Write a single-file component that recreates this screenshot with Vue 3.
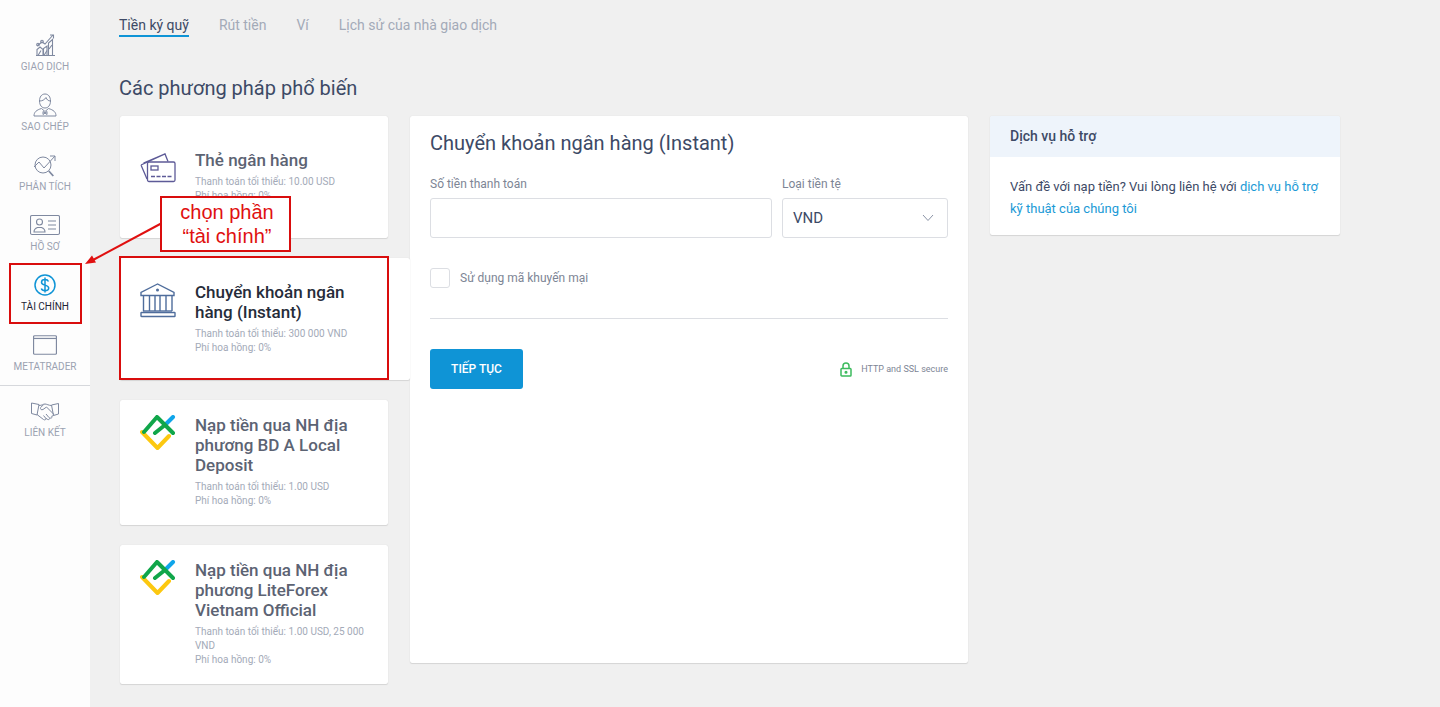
<script setup>
const tabs = ["Tiền ký quỹ", "Rút tiền", "Ví", "Lịch sử của nhà giao dịch"]
</script>

<template>
  <div class="page">
    <aside class="sidebar">
      <div class="nav-item">
        <svg width="24" height="24" viewBox="0 0 24 24" fill="none" stroke="#7f89a0" stroke-width="1.100">
          <path d="M3 22.500h19M4 22.500v-6l3-2.500 3 2.500v6M10.500 22.500v-7l3.500-2.500v9.500M15.500 22.500V10l4-3.500v16" />
          <path d="M5 22.500l3-5M11 22.500l3-5M16 16l3-4" />
          <path d="M4 13l5-4 3 2 8-9M17 2h3.500v3.500" />
          <circle cx="5" cy="11.500" r="1.300" /><circle cx="9" cy="8.500" r="1.300" />
        </svg>
        <span>Giao dịch</span>
      </div>
      <div class="nav-item">
        <svg width="24" height="24" viewBox="0 0 24 24" fill="none" stroke="#7f89a0" stroke-width="1">
          <path d="M6.500 8c0-4 2-7 5.500-7s5.500 3 5.500 7c0 4-2.200 7-5.500 7s-5.500-3-5.500-7z" />
          <path d="M6.500 8c2.500 0 5-1 6.500-3.500 .8 2 2 3.500 4.500 3.500" />
          <path d="M1 23c0-4 2.500-6 7.500-7.500l3.500 3 3.500-3c5 1.500 7.500 3.500 7.500 7.500z" />
          <path d="M10 18.500l2 1.500 2-1.500v3l-2-1.500-2 1.500z" />
        </svg>
        <span>Sao chép</span>
      </div>
      <div class="nav-item">
        <svg width="24" height="24" viewBox="0 0 24 24" fill="none" stroke="#7f89a0" stroke-width="1">
          <circle cx="10" cy="12" r="8" />
          <path d="M15.800 18l4.500 5" stroke-width="1.800" />
          <path d="M1 14l5-5 5 6 11-12M17 3h5v5" />
        </svg>
        <span>Phân tích</span>
      </div>
      <div class="nav-item">
        <svg width="30" height="22" viewBox="0 0 30 22" fill="none" stroke="#7f89a0" stroke-width="1.100">
          <rect x="0.500" y="1.500" width="29" height="19" rx="1.500" />
          <circle cx="9.500" cy="8" r="3" />
          <path d="M4 18c0-3 2-4 3.500-4.500h4C13 14 15 15 15 18z" />
          <path d="M18 7h8M18 11h8M18 15h8" />
        </svg>
        <span>Hồ sơ</span>
      </div>
      <div class="nav-item active">
        <svg width="24" height="24" viewBox="0 0 24 24" fill="none" stroke="#0f94d6">
          <circle cx="12" cy="12" r="10" stroke-width="1.500" />
          <path d="M15.500 8.500c-.5-1.300-2-2-3.500-2-2 0-3.500 1-3.500 2.700 0 3.800 7.200 2 7.200 5.800 0 1.700-1.700 2.600-3.700 2.600-1.700 0-3.200-.8-3.700-2.200M12 4.500v15" stroke-width="1.500" />
        </svg>
        <span>Tài chính</span>
      </div>
      <div class="nav-item">
        <svg width="24" height="20" viewBox="0 0 22 18" fill="none" stroke="#7f89a0" stroke-width="1.100">
          <rect x="0.500" y="0.500" width="21" height="17" rx="1" />
          <path d="M0.500 3h21" />
        </svg>
        <span>MetaTrader</span>
      </div>
      <div class="nav-divider"></div>
      <div class="nav-item partner">
        <svg width="30" height="20" viewBox="0 0 30 20" fill="none" stroke="#7f89a0" stroke-width="1">
          <path d="M1.500 2l7.500 1.500-2 10.500-5.500-1.500zM28.500 2.500L21.500 4l2 10.500 5-1.500z" />
          <path d="M9 4.500c3 0 4-1.500 6-1.500 1.500 0 4 1.500 6.500 1.500M23.500 13l-7-7-3.500 2.500c-1.500 .8-3.200-.3-2.300-2l3-3" />
          <path d="M7 13.500l6.500 5c1.500 1 2.700 0 2.300-1.200l2 1.200c1.300 .5 2.200-.7 1.700-1.700l1 .3c1.300 .2 2-1 1.200-2l.8-.3c1 0 1.500-.7 1-1.500M13.500 14.500l2.300 2.800M16 13l3 3.600" />
        </svg>
        <span>Liên kết</span>
      </div>
    </aside>

    <main class="main">
      <nav class="tabs">
        <a v-for="(tab, index) in tabs" :key="tab" class="tab" :class="{ current: index === 0 }">{{ tab }}</a>
      </nav>
      <h1 class="title">Các phương pháp phổ biến</h1>

      <div class="columns">
        <div class="methods">
          <div class="card">
            <div class="card-row">
              <svg class="method-icon card-icon" width="36" height="30" viewBox="0 0 36 30" fill="none" stroke="#5d5a97" stroke-width="1.300">
                <path d="M1 12L25 1l3 7.500M1 12l6 14M3.500 10l21-9" />
                <rect x="7.500" y="9" width="27.500" height="19.500" rx="1.500" fill="#fff" />
                <rect x="11" y="13" width="7" height="4" />
                <path d="M11 23.500h21" stroke-dasharray="4 1.500" />
              </svg>
              <div class="info">
                <h3>Thẻ ngân hàng</h3>
                <p>Thanh toán tối thiểu: 10.00 USD</p>
                <p>Phí hoa hồng: 0%</p>
              </div>
            </div>
          </div>

          <div class="card selected">
            <div class="card-row">
              <svg class="method-icon bank-icon" width="36" height="36" viewBox="0 0 36 36" fill="none" stroke="#4f6d9c" stroke-width="1.400">
                <path d="M17.500 1L1 9.500v3h33v-3z" />
                <circle cx="17.500" cy="7" r="0.800" fill="#4f6d9c" />
                <path d="M3.500 12.500V28M9.500 12.500V28M15 12.500V28M20 12.500V28M26 12.500V28M32 12.500V28" />
                <path d="M3 28h29" />
                <rect x="1" y="29.500" width="34" height="4" rx="0.500" />
              </svg>
              <div class="info">
                <h3>Chuyển khoản ngân hàng (Instant)</h3>
                <p>Thanh toán tối thiểu: 300 000 VND</p>
                <p>Phí hoa hồng: 0%</p>
              </div>
            </div>
          </div>

          <div class="card auto">
            <div class="card-row">
              <svg class="method-icon" width="36" height="36" viewBox="0 0 36 36" fill="none" stroke-width="4" stroke-linecap="round" stroke-linejoin="round">
                <path d="M2 17l15.500 16L29 21" stroke="#fcc810" />
                <path d="M25 10l8-8" stroke="#0fa5ea" />
                <path d="M4 17L17 2l16 16M15 18l10-8" stroke="#10a64a" />
              </svg>
              <div class="info">
                <h3>Nạp tiền qua NH địa phương BD A Local Deposit</h3>
                <p>Thanh toán tối thiểu: 1.00 USD</p>
                <p>Phí hoa hồng: 0%</p>
              </div>
            </div>
          </div>

          <div class="card auto">
            <div class="card-row">
              <svg class="method-icon" width="36" height="36" viewBox="0 0 36 36" fill="none" stroke-width="4" stroke-linecap="round" stroke-linejoin="round">
                <path d="M2 17l15.500 16L29 21" stroke="#fcc810" />
                <path d="M25 10l8-8" stroke="#0fa5ea" />
                <path d="M4 17L17 2l16 16M15 18l10-8" stroke="#10a64a" />
              </svg>
              <div class="info">
                <h3>Nạp tiền qua NH địa phương LiteForex Vietnam Official</h3>
                <p>Thanh toán tối thiểu: 1.00 USD, 25 000 VND</p>
                <p>Phí hoa hồng: 0%</p>
              </div>
            </div>
          </div>
        </div>

        <section class="panel">
          <h2>Chuyển khoản ngân hàng (Instant)</h2>
          <div class="fields">
            <div class="field amount">
              <label>Số tiền thanh toán</label>
              <input type="text" />
            </div>
            <div class="field currency">
              <label>Loại tiền tệ</label>
              <div class="select">
                <span>VND</span>
                <svg width="12" height="8" viewBox="0 0 12 8" fill="none" stroke="#8a93a6">
                  <path d="M1 1l5 5.500L11 1" />
                </svg>
              </div>
            </div>
          </div>
          <div class="promo">
            <span class="checkbox"></span>
            <span>Sử dụng mã khuyến mại</span>
          </div>
          <div class="panel-foot">
            <button class="next">Tiếp tục</button>
            <div class="secure">
              <svg width="12" height="15" viewBox="0 0 12 15" fill="none" stroke="#3dbb5e" stroke-width="1.500">
                <path d="M3 6.500V4a3 3 0 0 1 6 0v2.500" />
                <rect x="1" y="6.500" width="10" height="7.500" rx="0.800" />
                <circle cx="6" cy="10.200" r="0.800" fill="#3dbb5e" />
              </svg>
              <span>HTTP and SSL secure</span>
            </div>
          </div>
        </section>

        <section class="support">
          <div class="support-head">Dịch vụ hỗ trợ</div>
          <p>Vấn đề với nạp tiền? Vui lòng liên hệ với <a>dịch vụ hỗ trợ kỹ thuật của chúng tôi</a></p>
        </section>
      </div>
    </main>

    <!-- annotation drawn over the screenshot -->
    <div class="mark-nav"></div>
    <div class="mark-card"></div>
    <svg class="mark-arrow" width="90" height="60" viewBox="0 0 90 60" fill="none">
      <path d="M78 4L9 41" stroke="#e01010" stroke-width="2" />
      <path d="M1 45l11-1.500-4-7z" fill="#e01010" />
    </svg>
    <div class="mark-note">chọn phần<br />“tài chính”</div>
  </div>
</template>

<style>
body {
  background: #f0f0f0;
}
</style>

<style scoped>
.page {
  position: relative;
  display: flex;
  height: 707px;
  overflow: hidden;
  background: #f0f0f0;
  font-family: Roboto, "Liberation Sans", sans-serif;
  color: #3d4a66;
}

.sidebar {
  width: 90px;
  flex-shrink: 0;
  background: #fdfdfd;
  padding-top: 33px;
  box-sizing: border-box;
}

.nav-item {
  height: 60px;
  display: flex;
  flex-direction: column;
  align-items: center;
  font-size: 10px;
  line-height: 12px;
  text-transform: uppercase;
  color: #9ba2b1;
}

.nav-item svg {
  height: 24px;
  margin-bottom: 4px;
}

.nav-item.active {
  color: #1d2435;
}

.nav-divider {
  height: 1px;
  background: #d6d8dc;
  margin-top: -8px;
  margin-bottom: 13px;
}

.main {
  flex: 1;
  padding-left: 29px;
}

.tabs {
  display: flex;
  gap: 30px;
  padding-top: 16px;
}

.tab {
  font-size: 14px;
  line-height: 18px;
  padding-bottom: 1px;
  color: #a3aab8;
}

.tab.current {
  color: #3d4a66;
  border-bottom: 2px solid #0f94d6;
}

.title {
  margin: 39px 0 16px;
  font-size: 20px;
  font-weight: 400;
  line-height: 24px;
  color: #3d4a66;
}

.columns {
  display: flex;
  align-items: flex-start;
  margin-left: 1px;
}

.methods {
  width: 268px;
  display: flex;
  flex-direction: column;
  gap: 20px;
  flex-shrink: 0;
}

.card {
  box-sizing: border-box;
  height: 122px;
  background: #fff;
  border-radius: 2px;
  box-shadow: 0 1px 1px rgba(0, 0, 0, 0.1), 0 0 1px rgba(0, 0, 0, 0.15);
  display: flex;
  align-items: center;
  padding: 0 15px 2px 20px;
}

.card-row {
  display: flex;
  align-items: flex-start;
  gap: 19px;
}

.card.auto {
  height: auto;
  align-items: flex-start;
  padding-top: 15px;
  padding-bottom: 17px;
}

.card.selected {
  width: 290px;
  position: relative;
  z-index: 1;
  padding-right: 36px;
}

.method-icon {
  flex-shrink: 0;
}

.card-icon {
  margin-top: 3px;
}

.bank-icon {
  margin-top: 1px;
}

.info {
  min-width: 0;
}

.info h3 {
  margin: 0 0 5px;
  font-size: 17px;
  font-weight: 500;
  line-height: 20px;
  color: #5c6373;
}

.selected .info h3 {
  color: #262c3a;
}

.info p {
  margin: 0;
  font-size: 10px;
  line-height: 14px;
  color: #a3aab8;
}

.panel {
  box-sizing: border-box;
  width: 558px;
  height: 547px;
  margin-left: 22px;
  padding: 15px 20px;
  background: #fff;
  border-radius: 2px;
  box-shadow: 0 1px 1px rgba(0, 0, 0, 0.1), 0 0 1px rgba(0, 0, 0, 0.15);
}

.panel h2 {
  margin: 0 0 21px;
  font-size: 20px;
  font-weight: 400;
  line-height: 24px;
  color: #3d4a66;
}

.fields {
  display: flex;
  gap: 10px;
}

.field {
  display: flex;
  flex-direction: column;
}

.field.amount {
  width: 342px;
}

.field.currency {
  width: 166px;
}

.field label {
  font-size: 12px;
  line-height: 16px;
  margin-bottom: 6px;
  color: #7d8595;
}

.field input,
.select {
  box-sizing: border-box;
  height: 40px;
  border: 1px solid #dcdee3;
  border-radius: 3px;
  background: #fff;
}

.select {
  display: flex;
  align-items: center;
  justify-content: space-between;
  padding: 0 13px 0 10px;
  font-size: 15px;
  color: #3d4a66;
}

.promo {
  display: flex;
  align-items: center;
  gap: 10px;
  margin-top: 30px;
  padding-bottom: 30px;
  border-bottom: 1px solid #dcdee3;
  font-size: 12px;
  color: #7d8595;
}

.checkbox {
  box-sizing: border-box;
  width: 20px;
  height: 20px;
  border: 1px solid #dcdee3;
  border-radius: 3px;
}

.panel-foot {
  display: flex;
  align-items: center;
  justify-content: space-between;
  margin-top: 30px;
}

.next {
  width: 93px;
  height: 40px;
  border: 0;
  border-radius: 3px;
  background: #0f94d6;
  color: #fff;
  font-family: inherit;
  font-size: 12px;
  font-weight: 500;
  text-transform: uppercase;
}

.secure {
  display: flex;
  align-items: center;
  gap: 9px;
  font-size: 9px;
  color: #7d8595;
}

.support {
  box-sizing: border-box;
  width: 350px;
  margin-left: 22px;
  background: #fff;
  border-radius: 2px;
  box-shadow: 0 1px 1px rgba(0, 0, 0, 0.1), 0 0 1px rgba(0, 0, 0, 0.15);
  overflow: hidden;
}

.support-head {
  height: 41px;
  line-height: 40px;
  padding: 0 20px;
  background: #eef4fb;
  font-size: 14px;
  font-weight: 500;
  color: #3d4a66;
}

.support p {
  margin: 0;
  padding: 19px 20px 15px;
  font-size: 13px;
  line-height: 22px;
  color: #3d4a66;
}

.support a {
  color: #1b9ad6;
}

.mark-nav,
.mark-card,
.mark-note {
  position: absolute;
  box-sizing: border-box;
  border: 2px solid #d90d0d;
  z-index: 2;
}

.mark-nav {
  left: 9px;
  top: 263px;
  width: 73px;
  height: 61px;
}

.mark-card {
  left: 119px;
  top: 256px;
  width: 270px;
  height: 124px;
}

.mark-note {
  left: 160px;
  top: 196px;
  width: 131px;
  height: 56px;
  background: #fff;
  color: #e01010;
  font-family: "Liberation Sans", Arial, sans-serif;
  font-size: 20px;
  line-height: 24px;
  text-align: center;
  padding: 2px 0 0 3px;
}

.mark-arrow {
  position: absolute;
  left: 84px;
  top: 219px;
  z-index: 2;
}
</style>
